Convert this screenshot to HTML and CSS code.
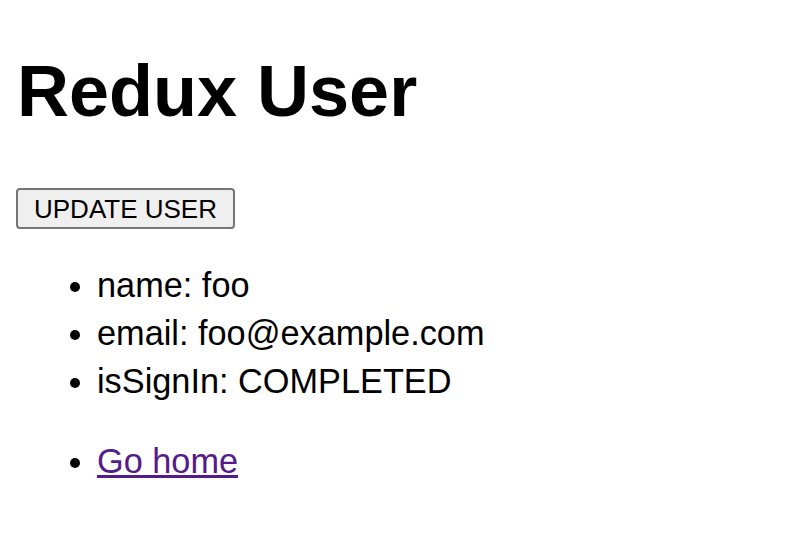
FILE: index.html
```html
<!DOCTYPE html>
<html>
  <head>
    <meta charset="utf-8" />
    <title>Redux User</title>
    <meta name="viewport" content="width=device-width, initial-scale=1.0" />
    <link rel="stylesheet" href="styles.css">
  </head>
  <body>
    <div id="app">
      <h1 class="title">Redux User</h1>

      <div class="actions">
        <button class="update">UPDATE USER</button>
      </div>

      <ul class="user">
        <li>name: foo</li>
        <li>email: foo@example.com</li>
        <li>isSignIn: COMPLETED</li>
      </ul>

      <ul class="nav">
        <li><a href="#/">Go home</a></li>
      </ul>
    </div>
  </body>
</html>
```

FILE: styles.css
```css
body {
  margin: 0;
  padding: 0 16px;
  font-family: "Liberation Sans", Arial, sans-serif;
  color: #000;
  background: #fff;
}

/**
 * Page heading
 */
.title {
  font-size: 72px;
  line-height: 82px;
  font-weight: bold;
  margin: 50px 0 0;
  padding-left: 1px;
}

.actions {
  margin-top: 56px;
  height: 41px;
}

.update {
  font-family: "Liberation Sans", Arial, sans-serif;
  font-size: 26px;
  line-height: 30px;
  height: 41px;
  padding: 3px 16px;
  margin: 0;
  color: #000;
  background: #efefef;
  border: 2px solid #767676;
  border-radius: 4px;
}

/**
 * Lists
 */
ul {
  margin: 32px 0;
  padding-left: 81px;
  font-size: 34.3px;
  line-height: 48px;
}

.nav a {
  color: #551a8b;
}
```
